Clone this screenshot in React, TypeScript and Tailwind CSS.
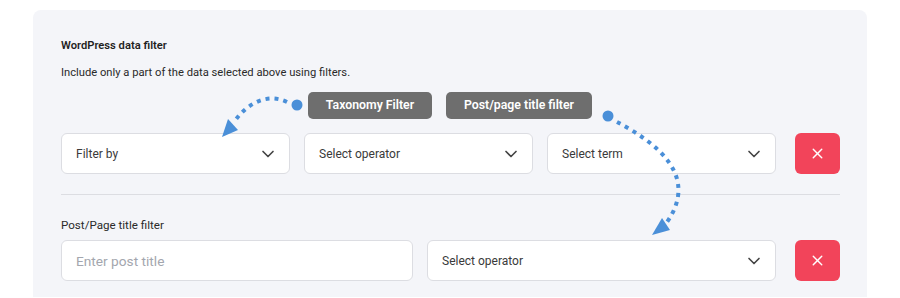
import { ChevronDown, X } from 'lucide-react';

function SelectBox({ label, className = '' }: { label: string; className?: string }) {
  return (
    <div
      className={`flex h-[41px] items-center justify-between rounded-[6px] border border-[#dcdde2] bg-white pl-[14px] pr-[11px] text-[12px] text-[#3a3a3a] ${className}`}
    >
      <span>{label}</span>
      <ChevronDown className="h-[20px] w-[20px] text-[#444]" strokeWidth={2} />
    </div>
  );
}

function DeleteButton() {
  return (
    <button className="flex h-[41px] w-[45px] shrink-0 items-center justify-center rounded-[6px] bg-[#f2445a]">
      <X className="h-[17px] w-[17px] text-white" strokeWidth={2} />
    </button>
  );
}

function Arrows() {
  return (
    <svg className="pointer-events-none absolute left-0 top-0" width="900" height="298" viewBox="0 0 900 298">
      <g fill="#4a8fd8" stroke="none">
        <circle cx="297" cy="95" r="5.5" />
        <circle cx="608" cy="106" r="5.5" />
        <polygon points="222,127 228,109 238,120" />
        <polygon points="652,225 662,208 670,220" />
      </g>
      <g fill="none" stroke="#4a8fd8" strokeWidth="4" strokeDasharray="4 5">
        <path d="M 287 92 C 268 83, 248 92, 234 112" />
        <path d="M 617 112 C 655 132, 700 165, 667 212" />
      </g>
    </svg>
  );
}

export default function App() {
  return (
    <div className="relative h-[298px] w-[900px] bg-white" style={{ fontFamily: 'Roboto, "Noto Sans", sans-serif' }}>
      <div className="ml-[33px] mt-[10px] w-[834px] rounded-t-[8px] bg-[#f4f5f9] px-[28px] pb-[16px] pr-[27px] pt-[28px]">
        <h3 className="text-[11.2px] font-semibold leading-[16px] text-[#1f1f1f]">WordPress data filter</h3>
        <p className="mt-[11px] text-[11.2px] leading-[16px] text-[#2a2a2a]">
          Include only a part of the data selected above using filters.
        </p>

        <div className="mt-[11px] flex gap-[14px] pl-[247px]">
          <span className="flex h-[27px] w-[124px] items-center justify-center rounded-[5px] bg-[#6e6e6e] text-[12.3px] font-semibold text-white">
            Taxonomy Filter
          </span>
          <span className="flex h-[27px] w-[146px] items-center justify-center rounded-[5px] bg-[#6e6e6e] text-[12.3px] font-semibold text-white">
            Post/page title filter
          </span>
        </div>

        <div className="mt-[14px] flex items-center gap-[19px]">
          <div className="flex flex-1 gap-[14px]">
            <SelectBox label="Filter by" className="flex-1" />
            <SelectBox label="Select operator" className="flex-1" />
            <SelectBox label="Select term" className="flex-1" />
          </div>
          <DeleteButton />
        </div>

        <div className="mt-[20px] h-px bg-[#dcdde2]" />

        <label className="mt-[22px] block text-[11.6px] leading-[16px] text-[#2a2a2a]">Post/Page title filter</label>
        <div className="mt-[7px] flex items-center gap-[19px]">
          <div className="flex flex-1 gap-[14px]">
            <input
              placeholder="Enter post title"
              className="h-[41px] min-w-0 flex-1 rounded-[6px] border border-[#dcdde2] bg-white px-[14px] text-[13.7px] text-[#3a3a3a] outline-none placeholder:text-[#a3a6ae]"
            />
            <SelectBox label="Select operator" className="flex-1" />
          </div>
          <DeleteButton />
        </div>
      </div>
      <Arrows />
    </div>
  );
}
